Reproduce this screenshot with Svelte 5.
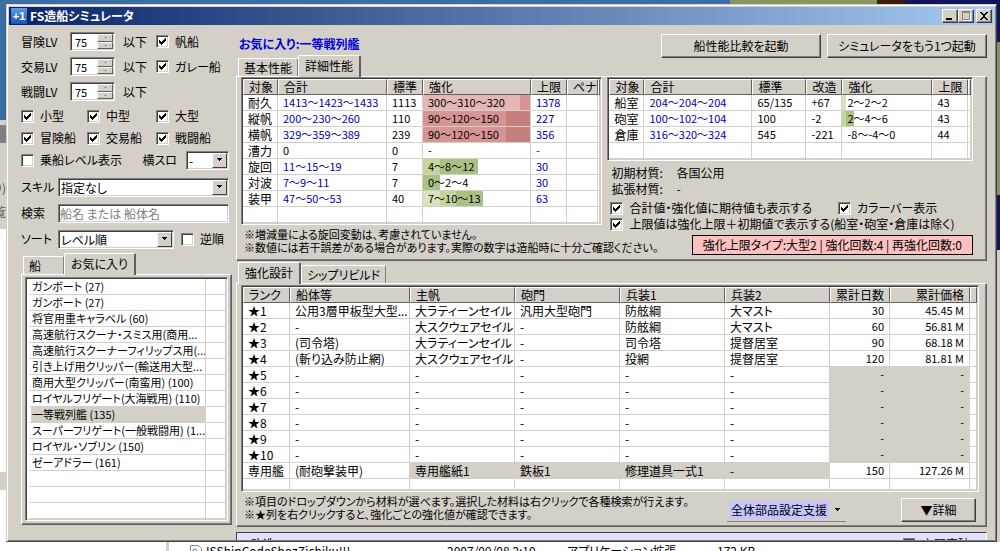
<script lang="ts">
	type Segment = [number, string];

	interface StatRow {
		name: string;
		total: string;
		base: string;
		mod?: string;
		boost: string;
		bar?: Segment[];
		limit: string;
	}

	const levels = [
		{ id: 'lv-adv', name: '冒険LV', type: '帆船' },
		{ id: 'lv-trade', name: '交易LV', type: 'ガレー船' },
		{ id: 'lv-battle', name: '戦闘LV', type: '' }
	];
	const kinds = ['小型', '中型', '大型', '冒険船', '交易船', '戦闘船'];

	const ships = [
		'ガンボート (27)',
		'ガンボート (27)',
		'将官用重キャラベル (60)',
		'高速航行スクーナ・スミス用(商用...',
		'高速航行スクーナーフィリップス用(...',
		'引き上げ用クリッパー(輸送用大型...',
		'商用大型クリッパー(南蛮用) (100)',
		'ロイヤルフリゲート(大海戦用) (110)',
		'一等戦列艦 (135)',
		'スーパーフリゲート(一般戦闘用) (1...',
		'ロイヤル・ソブリン (150)',
		'ゼーアドラー (161)',
		'',
		'',
		''
	];
	let selected = $state(8);

	const red1 = '#e6b5b6';
	const red2 = '#d79494';
	const red3 = '#c67e7e';
	const green1 = '#d7e3bd';
	const green2 = '#c3d69b';
	const green3 = '#abc084';

	const statCols = [35, 109, 36, 108, 36, 31];
	const stats: StatRow[] = [
		{ name: '耐久', total: '1413～1423～1433', base: '1113', boost: '300～310～320', bar: [[97, red1], [108, red2]], limit: '1378' },
		{ name: '縦帆', total: '200～230～260', base: '110', boost: '90～120～150', bar: [[83, red2], [108, red3]], limit: '227' },
		{ name: '横帆', total: '329～359～389', base: '239', boost: '90～120～150', bar: [[83, red2], [108, red3]], limit: '356' },
		{ name: '漕力', total: '0', base: '0', boost: '-', limit: '-' },
		{ name: '旋回', total: '11～15～19', base: '7', boost: '4～8～12', bar: [[17, green2], [55, green3]], limit: '30' },
		{ name: '対波', total: '7～9～11', base: '7', boost: '0～2～4', bar: [[17, green3]], limit: '30' },
		{ name: '装甲', total: '47～50～53', base: '40', boost: '7～10～13', bar: [[17, green1], [33, green2], [60, green3]], limit: '63' }
	];

	const roomCols = [35, 108, 54, 36, 90, 36];
	const rooms: StatRow[] = [
		{ name: '船室', total: '204～204～204', base: '65/135', mod: '+67', boost: '2～2～2', bar: [[4, green1]], limit: '43' },
		{ name: '砲室', total: '100～102～104', base: '100', mod: '-2', boost: '2～4～6', bar: [[4, green2], [12, green3]], limit: '43' },
		{ name: '倉庫', total: '316～320～324', base: '545', mod: '-221', boost: '-8～-4～0', limit: '44' }
	];

	const rankCols = [47, 120, 105, 105, 105, 105, 60, 80];
	const rankHeads = ['ランク', '船体等', '主帆', '砲門', '兵装1', '兵装2', '累計日数', '累計価格'];
	const ranks = [
		['★1', '公用3層甲板型大型...', '大ラティーンセイル', '汎用大型砲門', '防舷綱', '大マスト', '30', '45.45 M'],
		['★2', '-', '大スクウェアセイル', '-', '防舷綱', '大マスト', '60', '56.81 M'],
		['★3', '(司令塔)', '大ラティーンセイル', '-', '司令塔', '提督居室', '90', '68.18 M'],
		['★4', '(斬り込み防止網)', '大スクウェアセイル', '-', '投網', '提督居室', '120', '81.81 M'],
		...[5, 6, 7, 8, 9, 10].map((n) => ['★' + n, '-', '-', '-', '-', '-', '-', '-']),
		['専用艦', '(耐砲撃装甲)', '専用艦紙1', '鉄板1', '修理道具一式1', '-', '150', '127.26 M']
	];

	// special row locks its parts, unused rows lock their totals
	function locked(row: number, col: number) {
		if (row === 10) return col >= 2 && col <= 5;
		return row >= 4 && col >= 6;
	}

	function barFill(bar?: Segment[]) {
		if (!bar) return undefined;
		let from = 0;
		const stops = bar.map(([to, color]) => {
			const stop = `${color} ${from}px ${to}px`;
			from = to;
			return stop;
		});
		return `linear-gradient(90deg, ${stops.join(', ')}, transparent ${from}px)`;
	}
</script>

{#snippet check(label: string, checked = true)}
	<label class="check">
		<span class="box">
			<input type="checkbox" {checked} />
			<svg viewBox="0 0 7 7" shape-rendering="crispEdges"><path d="M0 2h1v1h1v1h1v-1h1v-1h1v-1h1v-1h1v3h-1v1h-1v1h-1v1h-1v1h-1v-1h-1v-1h-1z" /></svg>
		</span>
		<span>{label}</span>
	</label>
{/snippet}

{#snippet arrow()}
	<span class="drop"><svg viewBox="0 0 7 4" shape-rendering="crispEdges"><path d="M1 0h5v1h-1v1h-1v1h-1v-1h-1v-1h-1z" /></svg></span>
{/snippet}

{#snippet cols(widths: number[])}
	<colgroup>
		{#each widths as w}<col style:width="{w}px" />{/each}
		<col />
	</colgroup>
{/snippet}

<div class="desktop">
	<div class="behind"><span>り)</span><span>覧</span></div>
	<main class="window">
		<header class="titlebar">
			<span class="app-icon">+1</span>
			<h1>FS造船シミュレータ</h1>
			<div class="caption-buttons">
				<button aria-label="最小化"><svg viewBox="0 0 12 10" shape-rendering="crispEdges"><path d="M2 7h6v2h-6z" /></svg></button>
				<button aria-label="最大化" disabled><svg viewBox="0 0 12 10" shape-rendering="crispEdges"><path fill="#fff" d="M3 2h8v8h-8z" /><path fill="#87857f" d="M2 0h8v9h-8z" /><path fill="#d4d0c8" d="M3 2h6v6h-6z" /></svg></button>
				<button class="close" aria-label="閉じる"><svg viewBox="0 0 12 10" shape-rendering="crispEdges"><path d="M2 1h2v1h1v1h2v-1h1v-1h2v1h-1v1h-1v1h-1v2h1v1h1v1h1v1h-2v-1h-1v-1h-2v1h-1v1h-2v-1h1v-1h1v-1h1v-2h-1v-1h-1v-1h-1z" /></svg></button>
			</div>
		</header>

		<div class="body">
			<aside class="filters">
				<div class="level-rows">
					{#each levels as lv}
						<div class="level-row">
							<label for={lv.id}>{lv.name}</label>
							<div class="spinner">
								<input id={lv.id} type="text" inputmode="numeric" value="75" />
								<div class="spin-buttons">
									<button aria-label="増やす"></button>
									<button aria-label="減らす"></button>
								</div>
							</div>
							<span>以下</span>
							{#if lv.type}{@render check(lv.type)}{/if}
						</div>
					{/each}
				</div>

				<div class="kinds">
					{#each kinds as kind}{@render check(kind)}{/each}
				</div>
				<div class="board-row">
					{@render check('乗船レベル表示', false)}
					<div class="slot">
						<label for="slot">横スロ</label>
						<div class="select narrow">
							<select id="slot"><option>-</option></select>
							{@render arrow()}
						</div>
					</div>
				</div>

				<div class="field">
					<label for="skill">スキル</label>
					<div class="select">
						<select id="skill"><option>指定なし</option></select>
						{@render arrow()}
					</div>
				</div>
				<div class="field">
					<label for="search">検索</label>
					<input id="search" class="search" type="text" placeholder="船名 または 船体名" />
				</div>
				<div class="field sort">
					<label for="sort">ソート</label>
					<div class="select">
						<select id="sort"><option>レベル順</option></select>
						{@render arrow()}
					</div>
					{@render check('逆順', false)}
				</div>

				<div class="tabs side-tabs">
					<button class="tab">船</button>
					<button class="tab active">お気に入り</button>
				</div>
				<div class="panel side-panel">
					<div class="listview">
						<table class="ships">
							<colgroup><col /><col class="ship-extra" /></colgroup>
							<tbody>
								{#each ships as ship, i}
									<tr class:selected={i === selected} onclick={() => ship && (selected = i)}>
										<td>{ship}</td>
										<td></td>
									</tr>
								{/each}
							</tbody>
						</table>
					</div>
				</div>
			</aside>

			<section class="detail">
				<div class="detail-head">
					<div class="detail-title">
						<h2>お気に入り:一等戦列艦</h2>
						<div class="tabs">
							<button class="tab">基本性能</button>
							<button class="tab active">詳細性能</button>
						</div>
					</div>
					<div class="launchers">
						<button class="btn">船性能比較を起動</button>
						<button class="btn">シミュレータをもう1つ起動</button>
					</div>
				</div>

				<div class="panel stats-panel">
					<div class="stats">
						<div class="listview">
							<table>
								{@render cols(statCols)}
								<thead>
									<tr><th>対象</th><th>合計</th><th>標準</th><th>強化</th><th>上限</th><th>ペナ</th><th></th></tr>
								</thead>
								<tbody>
									{#each stats as s}
										<tr>
											<td>{s.name}</td>
											<td class="num" class:calc={s.total !== '0'}>{s.total}</td>
											<td class="num">{s.base}</td>
											<td class="num" style:background-image={barFill(s.bar)}>{s.boost}</td>
											<td class="num calc">{s.limit}</td>
											<td></td>
											<td></td>
										</tr>
									{/each}
									<tr><td></td><td></td><td></td><td></td><td></td><td></td><td></td></tr>
								</tbody>
							</table>
						</div>
						<p class="notes">※増減量による旋回変動は、考慮されていません。<br />※数値には若干誤差がある場合があります。実際の数字は造船時に十分ご確認ください。</p>
					</div>

					<div class="rooms">
						<div class="listview">
							<table>
								{@render cols(roomCols)}
								<thead>
									<tr><th>対象</th><th>合計</th><th>標準</th><th>改造</th><th>強化</th><th>上限</th><th></th></tr>
								</thead>
								<tbody>
									{#each rooms as r}
										<tr>
											<td>{r.name}</td>
											<td class="num calc">{r.total}</td>
											<td class="num">{r.base}</td>
											<td class="num">{r.mod}</td>
											<td class="num" style:background-image={barFill(r.bar)}>{r.boost}</td>
											<td class="num">{r.limit}</td>
											<td></td>
										</tr>
									{/each}
									<tr><td></td><td></td><td></td><td></td><td></td><td></td><td></td></tr>
								</tbody>
							</table>
						</div>
						<dl>
							<dt>初期材質:</dt><dd>各国公用</dd>
							<dt>拡張材質:</dt><dd>-</dd>
						</dl>
						<div class="options">
							{@render check('合計値・強化値に期待値も表示する')}
							{@render check('カラーバー表示')}
						</div>
						<div class="options">
							{@render check('上限値は強化上限＋初期値で表示する(船室・砲室・倉庫は除く)')}
						</div>
						<div class="limit-box">強化上限タイプ:大型2 | 強化回数:4 | 再強化回数:0</div>
					</div>
				</div>

				<div class="tabs plan-tabs">
					<button class="tab active">強化設計</button>
					<button class="tab">シップリビルド</button>
				</div>
				<div class="panel plan-panel">
					<div class="listview">
						<table>
							{@render cols(rankCols)}
							<thead>
								<tr>
									{#each rankHeads as head, c}<th class:right={c >= 6}>{head}</th>{/each}
									<th></th>
								</tr>
							</thead>
							<tbody>
								{#each ranks as row, r}
									<tr>
										{#each row as cell, c}
											<td class:right={c >= 6} class:num={c >= 6} class:locked={locked(r, c)}>{cell}</td>
										{/each}
										<td></td>
									</tr>
								{/each}
								<tr class="rest">{#each rankHeads as _}<td></td>{/each}<td></td></tr>
							</tbody>
						</table>
					</div>
					<div class="plan-foot">
						<p class="notes">※項目のドロップダウンから材料が選べます。選択した材料は右クリックで各種検索が行えます。<br />※★列を右クリックすると、強化ごとの強化値が確認できます。</p>
						<button class="tool"><span>全体部品設定支援</span><svg viewBox="0 0 5 3" shape-rendering="crispEdges"><path d="M0 0h5v1h-1v1h-1v1h-1v-1h-1v-1h-1z" /></svg></button>
						<button class="btn more">▼詳細</button>
					</div>
				</div>

				<div class="remodel">
					<span>改造</span>
					{@render check('上限突破', false)}
				</div>
			</section>
		</div>
	</main>
	<div class="explorer">
		<svg viewBox="0 0 12 8"><path fill="#fff" stroke="#8a8a8a" d="M.5 8V.5h8l3 3V8" /><circle cx="5" cy="6" r="2" fill="none" stroke="#4b87b5" /></svg>
		<span>ISShipCodeShozZichiku!!!</span>
		<span>2007/09/08 2:10</span>
		<span>アプリケーション拡張</span>
		<span>172 KB</span>
	</div>
</div>

<style>
	:global(body) {
		margin: 0;
	}

	.desktop {
		position: relative;
		display: flex;
		flex-direction: column;
		height: 100vh;
		overflow: hidden;
		box-sizing: border-box;
		padding: 4px 3px 0 6px;
		background:
			linear-gradient(180deg, transparent 42px, #87965f 42px 195px, #10145c 195px 250px, #d4d0c8 250px) right / 3px 100% no-repeat,
			linear-gradient(90deg, #3a6ea5 73%, #87965f 73% 877px, #3c1c0c 877px 905px, #10145c 905px) top / 100% 42px no-repeat,
			linear-gradient(180deg, #3a6ea5 120px, #d4d0c8 120px 125px, #808080 125px 143px, #d4d0c8 143px 229px, #fff 229px 472px, #d4d0c8 472px 490px, #fff 490px);
		color: #000;
		font-family: 'Noto Sans CJK JP', 'Liberation Sans', sans-serif;
		font-size: 12px;
		line-height: 16px;
		font-feature-settings: 'palt';
		white-space: nowrap;
	}

	.behind {
		position: absolute;
		left: 0;
		top: 180px;
		width: 6px;
		display: flex;
		flex-direction: column;
		align-items: flex-end;
		gap: 8px;
		overflow: hidden;
		color: #555;
	}

	.window {
		position: relative;
		flex: 1;
		min-height: 0;
		display: flex;
		flex-direction: column;
		padding: 1px;
		background: #d4d0c8;
		border: 1px solid;
		border-color: #d4d0c8 #404040 #404040 #d4d0c8;
		box-shadow: inset 1px 1px #fff, inset -1px -1px #808080;
	}

	/* title bar */
	.titlebar {
		display: flex;
		align-items: center;
		gap: 3px;
		height: 18px;
		margin: 1px 1px 0;
		padding: 0 2px;
		background: linear-gradient(90deg, #0a246a, #a6caf0);
	}
	.titlebar h1 {
		flex: 1;
		margin: 0;
		color: #fff;
		font-size: 12px;
		font-weight: 700;
	}
	.app-icon {
		width: 16px;
		height: 16px;
		background: linear-gradient(#5c9cec, #1c50b8);
		color: #fff;
		font: 700 11px/16px 'Liberation Sans', sans-serif;
		text-align: center;
	}

	button {
		padding: 0;
		color: inherit;
		background: #d4d0c8;
		font: inherit;
		font-feature-settings: inherit;
		white-space: nowrap;
	}

	.caption-buttons {
		display: flex;
	}
	.caption-buttons button {
		display: flex;
		align-items: center;
		justify-content: center;
		width: 16px;
		height: 14px;
		border: 1px solid;
		border-color: #fff #404040 #404040 #fff;
		box-shadow: inset -1px -1px #808080;
	}
	.caption-buttons .close {
		margin-left: 2px;
	}
	.caption-buttons svg {
		flex: none;
		width: 12px;
		height: 10px;
	}

	.body {
		flex: 1;
		min-height: 0;
		display: grid;
		grid-template-columns: 227px 1fr;
		padding: 0 8px 0 1px;
		overflow: hidden;
	}

	/* filters */
	.filters {
		padding: 4px 4px 0 12px;
	}
	.level-row {
		display: grid;
		grid-template-columns: 49px 53px 33px 1fr;
		align-items: center;
		height: 25px;
	}
	.kinds {
		display: grid;
		grid-template-columns: 66px 69px 1fr;
		grid-auto-rows: 22px;
		align-items: center;
		margin-top: 1px;
	}
	.board-row {
		display: flex;
		align-items: center;
		justify-content: space-between;
		height: 22px;
		margin: 0 3px 3px 0;
	}
	.slot {
		display: flex;
		align-items: center;
		gap: 9px;
	}

	.check {
		display: flex;
		align-items: center;
		gap: 6px;
	}
	.box {
		position: relative;
		flex: none;
		width: 13px;
		height: 13px;
	}
	.box input {
		appearance: none;
		display: block;
		box-sizing: border-box;
		width: 13px;
		height: 13px;
		margin: 0;
		background: #fff;
		border: 1px solid;
		border-color: #808080 #fff #fff #808080;
		box-shadow: inset 1px 1px #404040, inset -1px -1px #d4d0c8;
	}
	.box svg {
		position: absolute;
		left: 3px;
		top: 3px;
		width: 7px;
		height: 7px;
		display: none;
		pointer-events: none;
	}
	.box input:checked + svg {
		display: block;
	}

	.spinner,
	.select,
	.search {
		box-sizing: border-box;
		background: #fff;
		border: 1px solid;
		border-color: #808080 #fff #fff #808080;
		box-shadow: inset 1px 1px #404040, inset -1px -1px #d4d0c8;
	}
	.spinner {
		display: flex;
		width: 45px;
		height: 19px;
		padding: 1px;
	}
	.spinner input {
		flex: 1;
		min-width: 0;
		margin: 0;
		padding: 0 0 0 3px;
		border: none;
		outline: none;
		background: none;
		font: inherit;
		font-size: 11px;
	}
	.spin-buttons {
		display: flex;
		flex-direction: column;
		width: 16px;
	}
	.spin-buttons button {
		flex: 1;
		border: 1px solid;
		border-color: #fff #606060 #606060 #fff;
		background: linear-gradient(#404040, #404040) center / 1px 1px no-repeat #d4d0c8;
	}

	.select {
		position: relative;
		flex: 1;
		height: 19px;
		padding: 1px;
	}
	.select.narrow {
		flex: none;
		width: 43px;
	}
	.select select {
		appearance: none;
		display: block;
		width: 100%;
		height: 15px;
		margin: 0;
		padding: 0 16px 0 1px;
		border: none;
		outline: none;
		background: none;
		color: #000;
		font: inherit;
		font-feature-settings: inherit;
		line-height: 15px;
	}
	.drop {
		position: absolute;
		top: 1px;
		right: 1px;
		bottom: 1px;
		width: 13px;
		display: flex;
		align-items: center;
		justify-content: center;
		border: 1px solid;
		border-color: #fff #404040 #404040 #fff;
		background: #d4d0c8;
		pointer-events: none;
	}
	.drop svg {
		width: 7px;
		height: 4px;
	}

	.field {
		display: flex;
		align-items: center;
		gap: 7px;
		height: 26px;
		margin-right: 3px;
	}
	.sort {
		margin-right: 8px;
	}
	.field > label:first-child {
		width: 30px;
	}
	.search {
		flex: 1;
		min-width: 0;
		height: 19px;
		padding: 0 1px;
		font: inherit;
		font-feature-settings: inherit;
	}
	.search::placeholder {
		color: #808080;
	}

	/* tabs */
	.tabs {
		display: flex;
		align-items: flex-end;
		height: 21px;
		padding-left: 2px;
	}
	.tab {
		height: 18px;
		padding: 0 5px;
		border: 1px solid #fff;
		border-bottom: none;
		border-right-color: #808080;
		border-radius: 2px 2px 0 0;
	}
	.tab.active {
		position: relative;
		height: 22px;
		margin-bottom: -1px;
		padding: 0 6px 2px;
		border-right: 2px solid #606060;
	}
	.side-tabs {
		height: 22px;
	}
	.side-tabs .tab:first-child {
		width: 41px;
		text-align: left;
	}

	.panel {
		border: 1px solid;
		border-color: #fff #606060 #606060 #fff;
		box-shadow: inset -1px -1px #808080;
	}
	.side-panel {
		padding: 2px 3px 3px;
	}

	/* tables */
	.listview {
		padding: 1px;
		background: #fff;
		border: 1px solid;
		border-color: #808080 #fff #fff #808080;
		box-shadow: inset 1px 1px #404040, inset -1px -1px #d4d0c8;
	}
	table {
		width: 100%;
		table-layout: fixed;
		border-collapse: separate;
		border-spacing: 0;
		line-height: 15px;
	}
	th,
	td {
		overflow: hidden;
		padding: 0 0 0 5px;
		text-align: left;
		font-weight: 400;
	}
	th:last-child,
	td:last-child {
		padding: 0;
	}
	th {
		height: 14px;
		line-height: 14px;
		background: #d4d0c8;
		border: 1px solid;
		border-color: #fff #606060 #606060 #fff;
	}
	td {
		height: 15px;
		border-right: 1px solid #d4d0c8;
		border-bottom: 1px solid #d4d0c8;
	}
	.num {
		font-size: 11px;
	}
	.calc {
		color: #0000b0;
	}
	.right {
		padding: 0 5px 0 0;
		text-align: right;
	}
	.locked {
		background: #d4d0c8;
	}
	.rest td {
		height: 10px;
	}
	.ships {
		font-size: 11px;
	}
	.ship-extra {
		width: 20px;
	}
	.ships td:first-child {
		border-left: 4px solid #fff;
		padding-left: 1px;
	}
	.ships .selected td:first-child {
		background: #d4d0c8;
	}

	/* detail */
	.detail {
		min-width: 0;
	}
	.detail-head {
		display: flex;
		justify-content: space-between;
	}
	.detail-title h2 {
		margin: 0;
		padding: 11px 0 3px 3px;
		color: #0000e0;
		font-size: 12px;
		font-weight: 700;
	}
	.launchers {
		display: flex;
		gap: 6px;
		padding-top: 9px;
	}
	.btn {
		width: 160px;
		height: 24px;
		border: 1px solid;
		border-color: #fff #404040 #404040 #fff;
		box-shadow: inset -1px -1px #808080;
	}

	.stats-panel {
		display: grid;
		grid-template-columns: 361fr 365fr;
		gap: 5px;
		padding: 0 13px 5px 4px;
	}
	.stats,
	.rooms {
		min-width: 0;
	}
	.notes {
		margin: 3px 0 0 3px;
		font-size: 11px;
		line-height: 13px;
	}
	dl {
		display: grid;
		grid-template-columns: 65px 1fr;
		margin: 4px 0 3px 4px;
	}
	dd {
		margin: 0;
	}
	.options {
		display: flex;
		gap: 26px;
		margin-left: 3px;
	}
	.limit-box {
		width: max-content;
		margin: 3px 0 0 auto;
		padding: 1px 10px;
		background: #ffc0c0;
		border: 1px solid #000;
	}

	.plan-tabs {
		margin-top: 1px;
	}
	.plan-panel {
		padding: 1px 7px 4px 4px;
	}
	.plan-foot {
		display: flex;
		align-items: flex-start;
	}
	.tool {
		display: flex;
		align-items: center;
		gap: 6px;
		height: 24px;
		margin: 6px 55px 0 auto;
		padding: 0 6px 0 2px;
		border: none;
		border-bottom: 1px solid #808080;
	}
	.tool span {
		padding: 1px 2px;
		background: #c5c5ff;
	}
	.tool svg {
		width: 5px;
		height: 3px;
	}
	.more {
		width: 75px;
		margin: 6px 3px 0 0;
	}

	.remodel {
		display: flex;
		justify-content: space-between;
		align-items: flex-start;
		margin-top: 5px;
		padding: 3px 16px 0 14px;
		background: #e0e0ff;
		border: 1px solid;
		border-color: #404040 #fff #fff #404040;
	}

	.explorer {
		display: grid;
		grid-template-columns: 30px 241px 120px 150px 1fr;
		height: 9px;
		margin: 0 -3px 0 -6px;
		padding-left: 176px;
		background: linear-gradient(90deg, #fff 166px, #d4d0c8 166px 169px, #fff 169px);
		overflow: hidden;
	}
	.explorer svg {
		width: 12px;
		height: 8px;
		margin: 3px 0 0 14px;
	}
	.explorer span {
		padding-top: 1px;
	}
</style>
